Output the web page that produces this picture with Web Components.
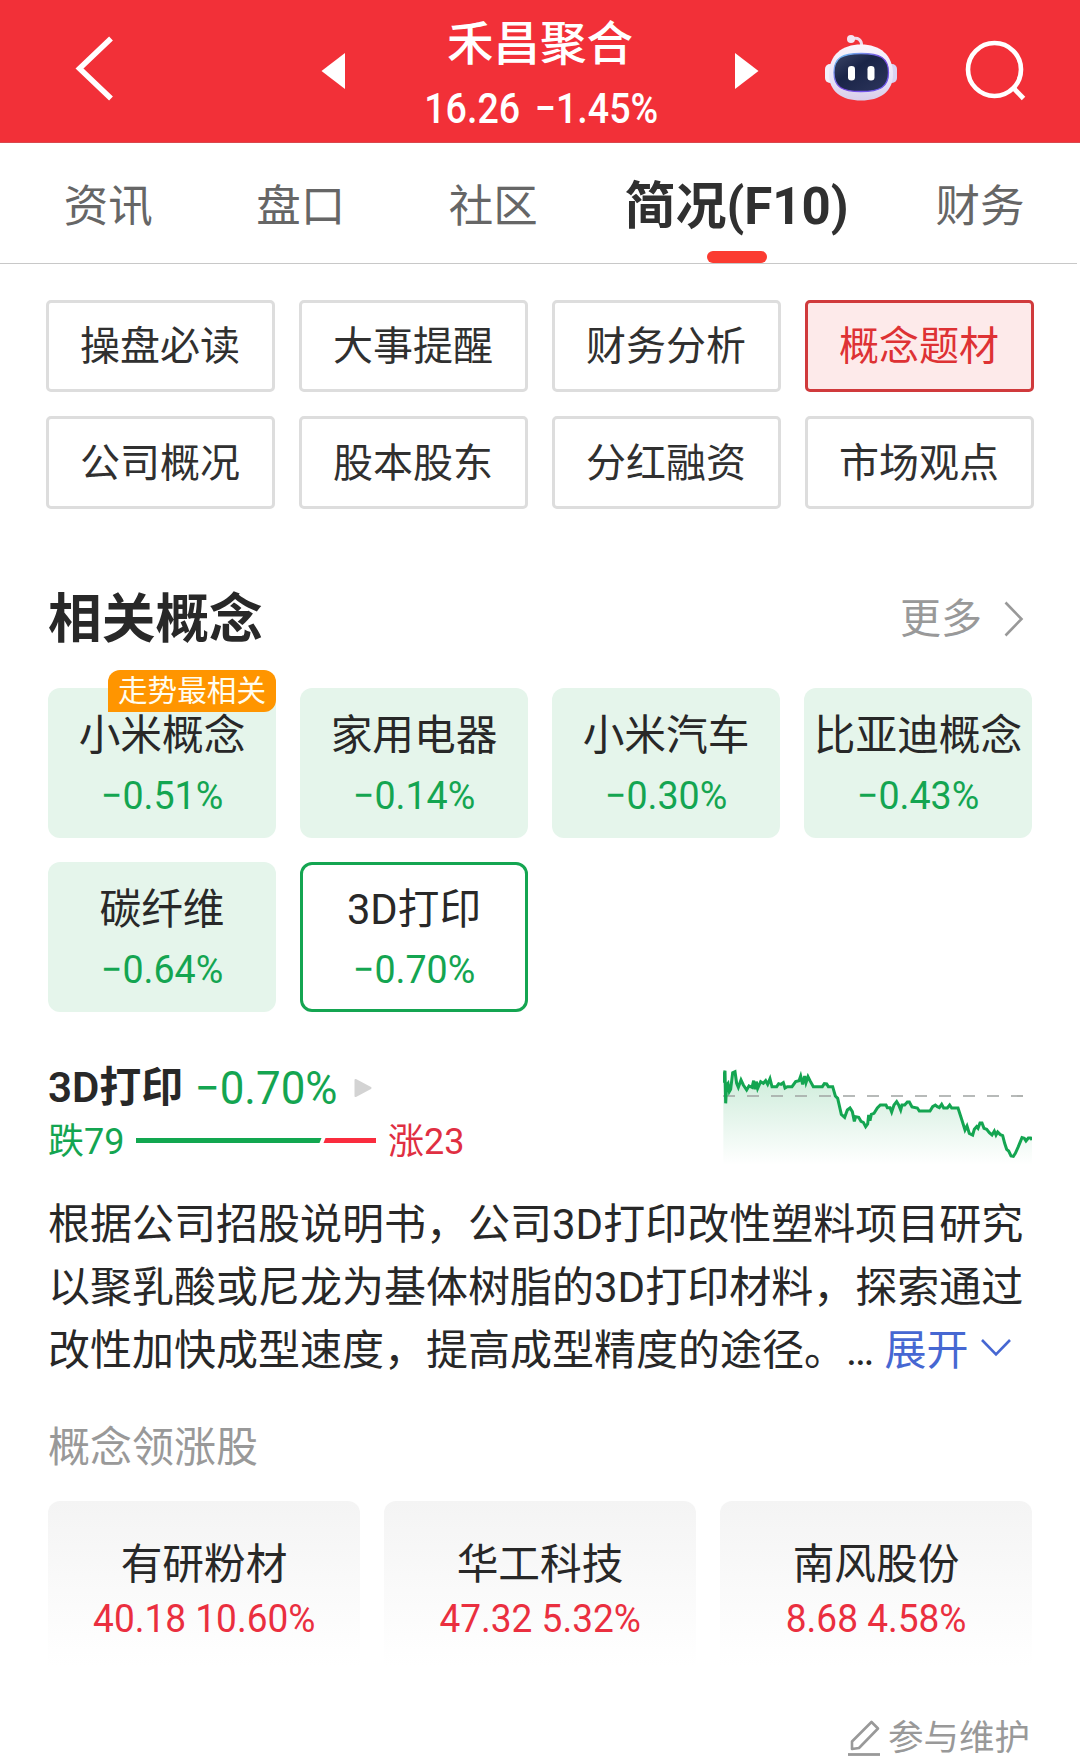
<!DOCTYPE html>
<html lang="zh-CN">
<head>
<meta charset="utf-8">
<title>禾昌聚合</title>
<style>
  body {
    margin: 0;
    width: 1080px;
    height: 1758px;
    overflow: hidden;
    background: #fff;
    color: #282828;
    font-family: Roboto, "Noto Sans CJK SC", sans-serif;
    --green: #14a551;
    --red: #ea2f3f;
    --grey: #999;
  }
</style>
</head>
<body>
<stock-page></stock-page>

<script>
// Small helper: attach an open shadow root with the given markup
class BaseElement extends HTMLElement {
  connectedCallback() {
    if (this.shadowRoot) return;
    this.attachShadow({ mode: "open" });
    this.shadowRoot.innerHTML = this.render();
  }
}

// Numbers are set slightly condensed
class QuoteValue extends BaseElement {
  render() {
    return `
      <style>
        :host { display: inline-block; white-space: nowrap; transform: scaleX(var(--squeeze, 0.955)); }
      </style>
      <slot></slot>
    `;
  }
}
customElements.define("quote-value", QuoteValue);

class StockHeader extends BaseElement {
  render() {
    return `
      <style>
        :host {
          display: grid;
          grid-template-columns: 320px 26px 388px 26px 320px;
          height: 143px;
          background: #f23038;
          color: #fff;
          box-shadow: inset 0 -1px #d9484d;
        }
        svg { display: block; height: 143px; width: 100%; }
        .title { padding-top: 14px; text-align: center; white-space: nowrap; }
        .name { font-size: 46.5px; line-height: 60px; font-weight: 500; }
        .price { font-size: 42.5px; line-height: 69px; font-weight: 500; padding-left: 3px; word-spacing: 6px; --squeeze: 0.885; }
      </style>
      <svg viewBox="0 0 320 143">
        <path d="M111 38.5L79.500 68.500L111 98.500" fill="none" stroke="#fff" stroke-width="5.500"/>
      </svg>
      <svg viewBox="320 0 26 143"><path d="M345 53V89L321.500 71Z" fill="#fff"/></svg>
      <div class="title">
        <div class="name"><slot name="name"></slot></div>
        <div class="price"><quote-value><slot name="price"></slot></quote-value></div>
      </div>
      <svg viewBox="734 0 26 143"><path d="M735 53V89L758.500 71Z" fill="#fff"/></svg>
      <svg viewBox="760 0 320 143">
        <defs>
          <linearGradient id="shell" x1="0" y1="0" x2="0" y2="1">
            <stop offset="0" stop-color="#fbf5fc"/>
            <stop offset="0.6" stop-color="#e9e4f8"/>
            <stop offset="1" stop-color="#d8cdea"/>
          </linearGradient>
          <linearGradient id="rim" x1="0" y1="0" x2="1" y2="1">
            <stop offset="0" stop-color="#6fd0f5"/>
            <stop offset="0.5" stop-color="#7a49e0"/>
            <stop offset="1" stop-color="#6a5cf0"/>
          </linearGradient>
          <linearGradient id="face" x1="0" y1="0" x2="1" y2="1">
            <stop offset="0" stop-color="#3c4668"/>
            <stop offset="0.4" stop-color="#1a2448"/>
            <stop offset="1" stop-color="#2d365c"/>
          </linearGradient>
        </defs>
        <path d="M852 39C858 37 862 40 861.500 46" fill="none" stroke="#f0dcec" stroke-width="3"/>
        <circle cx="851" cy="39" r="4" fill="#f4e4f2"/>
        <rect x="825" y="64" width="12" height="19" rx="5" fill="#f3f0fb"/>
        <rect x="885" y="64" width="12" height="19" rx="5" fill="#d9d3f3"/>
        <path d="M861 44.500C880 44.500 893 55 893 74C893 92 880 100.500 861 100.500C842 100.500 829 92 829 74C829 55 842 44.500 861 44.500Z" fill="url(#shell)"/>
        <path d="M861 53.500C880 53.500 888.500 58 888.500 72.500C888.500 87 880 91.500 861 91.500C842 91.500 834 87 834 72.500C834 58 842 53.500 861 53.500Z" fill="url(#face)" stroke="url(#rim)" stroke-width="1.300"/>
        <rect x="848" y="66" width="7" height="14.500" rx="3.300" fill="#fff"/>
        <rect x="867.500" y="66" width="7" height="14.500" rx="3.300" fill="#fff"/>
        <circle cx="994.500" cy="69.500" r="26.500" fill="none" stroke="#fff" stroke-width="4.600"/>
        <path d="M1013.500 88L1023.500 98.500" stroke="#fff" stroke-width="4.800"/>
      </svg>
    `;
  }
}
customElements.define("stock-header", StockHeader);

class TabBar extends BaseElement {
  render() {
    return `
      <style>
        :host {
          display: grid;
          grid-template-columns: 192.5px 192.5px 192.5px 294px 193px;
          box-sizing: border-box;
          width: 1077px;
          height: 121px;
          padding-left: 12px;
          border-bottom: 1px solid #c8c8c8;
        }
      </style>
      <slot></slot>
    `;
  }
}
customElements.define("tab-bar", TabBar);

class TabItem extends BaseElement {
  render() {
    return `
      <style>
        :host {
          display: flex;
          flex-direction: column;
          align-items: center;
          justify-content: space-between;
          height: 120px;
          color: #666;
          font-size: 44.5px;
          white-space: nowrap;
        }
        :host([active]) { color: #303030; font-size: 51px; font-weight: 700; }
        .label { line-height: 128px; height: 108px; }
        .mark { width: 60px; height: 12px; border-radius: 6px; }
        :host([active]) .mark { background: #fb3b31; }
      </style>
      <div class="label"><slot></slot></div>
      <div class="mark"></div>
    `;
  }
}
customElements.define("tab-item", TabItem);

class NavChip extends BaseElement {
  render() {
    return `
      <style>
        :host {
          display: flex;
          align-items: center;
          justify-content: center;
          box-sizing: border-box;
          border: 3px solid #ddd;
          border-radius: 5px;
          padding: 2px 1px 0 0;
          color: #303030;
          font-size: 40px;
          line-height: 60px;
        }
        :host([active]) { border-color: #d03a3c; background: #fdeaea; color: #de3234; }
      </style>
      <slot></slot>
    `;
  }
}
customElements.define("nav-chip", NavChip);

class SectionHeading extends BaseElement {
  render() {
    return `
      <style>
        :host { display: flex; align-items: center; height: 80px; margin: 70px 48px 0; line-height: 80px; }
        .title { flex: 1; padding-top: 2px; font-size: 53.7px; font-weight: 700; }
        .more { font-size: 41px; color: var(--grey); }
        svg { display: block; margin: 0 8px 0 22px; }
      </style>
      <div class="title"><slot></slot></div>
      <div class="more"><slot name="more"></slot></div>
      <svg width="20" height="38" viewBox="0 0 20 38">
        <path d="M1.500 2.500L17.500 19L1.500 35.500" fill="none" stroke="#999" stroke-width="2.600"/>
      </svg>
    `;
  }
}
customElements.define("section-heading", SectionHeading);

class ConceptCard extends BaseElement {
  render() {
    const badge = this.getAttribute("badge");
    return `
      <style>
        :host {
          display: block;
          position: relative;
          box-sizing: border-box;
          height: 150px;
          padding-top: 15px;
          border: 3px solid transparent;
          border-radius: 12px;
          background: #e5f5eb;
          text-align: center;
          white-space: nowrap;
        }
        :host([selected]) { background: #fff; border-color: var(--green); }
        .name { font-size: 41.7px; line-height: 60px; margin: 0 -3px; }
        .value { font-size: 39.4px; line-height: 60px; color: var(--green); }
        .badge {
          position: absolute;
          right: -3px;
          top: -21px;
          width: 168px;
          height: 42px;
          border-radius: 12px 12px 12px 0;
          background: #ff9500;
          color: #fffdf0;
          font-size: 29.6px;
          line-height: 42px;
        }
      </style>
      ${badge ? `<div class="badge">${badge}</div>` : ""}
      <div class="name"><slot></slot></div>
      <div class="value"><quote-value>${this.getAttribute("value")}</quote-value></div>
    `;
  }
}
customElements.define("concept-card", ConceptCard);

// Falling / rising stock counts with a proportional bar between them
class BreadthBar extends BaseElement {
  render() {
    return `
      <style>
        :host { display: flex; align-items: center; height: 48px; font-size: 36px; line-height: 48px; white-space: nowrap; }
        .down { color: var(--green); width: 88px; }
        .up { color: #e02f42; margin-left: 12px; }
        svg { display: block; margin-bottom: 3px; }
      </style>
      <div class="down">跌${this.getAttribute("down")}</div>
      <svg width="240" height="5" viewBox="0 0 240 5">
        <path d="M0 0H185.500L183.500 5H0Z" fill="#12a750"/>
        <path d="M189.500 0H240V5H187.500Z" fill="#fa2c3e"/>
      </svg>
      <div class="up">涨${this.getAttribute("up")}</div>
    `;
  }
}
customElements.define("breadth-bar", BreadthBar);

class TrendChart extends BaseElement {
  render() {
    const line = "70,98 72,75 75,62 77,160 80,105 84,100 88,125 92,118 98,68 105,65 110,100 115,112 123,90 130,105 140,120 147,108 156,112 161,92 165,118 169,95 173,115 182,95 190,100 197,92 203,103 210,86 216,110 230,110 236,101 243,103 250,98 255,114 262,110 276,110 287,95 297,92 302,78 308,103 314,78 318,98 324,80 330,92 340,110 367,110 373,101 380,102 385,110 398,110 406,138 413,145 424,193 434,202 442,180 450,174 457,185 463,214 467,200 476,202 483,214 490,217 497,230 503,222 506,195 510,212 514,193 522,190 532,174 541,165 558,165 562,173 570,173 575,186 582,165 590,155 596,165 602,180 606,165 614,165 622,156 628,156 636,171 652,174 658,183 690,183 698,170 706,165 712,170 718,173 725,163 731,174 742,174 749,165 755,174 774,174 784,205 795,240 801,228 808,250 818,255 823,238 830,230 834,235 840,219 846,219 852,235 860,238 868,248 876,255 883,243 888,255 893,246 901,254 908,257 914,280 920,298 926,303 933,318 940,319 946,310 955,290 966,263 973,265 978,273 985,264 992,264 996,270";
    return `
      <style>
        :host, svg { display: block; }
      </style>
      <svg width="309" height="100" viewBox="69 45 927 300">
        <defs>
          <linearGradient id="area" x1="0" y1="0" x2="0" y2="1">
            <stop offset="0" stop-color="#14a551" stop-opacity="0.22"/>
            <stop offset="1" stop-color="#14a551" stop-opacity="0"/>
          </linearGradient>
        </defs>
        <polygon points="70,345 ${line} 996,345" fill="url(#area)"/>
        <path d="M69 138H972" stroke="#a0a4a2" stroke-width="5" stroke-dasharray="36"/>
        <polyline points="${line}" fill="none" stroke="#14a551" stroke-width="9"/>
      </svg>
    `;
  }
}
customElements.define("trend-chart", TrendChart);

class ConceptDetail extends BaseElement {
  render() {
    return `
      <style>
        :host { display: flex; justify-content: space-between; margin: 46px 48px 0; height: 108px; }
        .line { display: flex; align-items: center; height: 60px; line-height: 60px; white-space: nowrap; }
        .name { font-size: 42px; font-weight: 600; }
        .value { font-size: 45.5px; color: var(--green); margin: 2px 13px 0 9px; --squeeze: 0.965; }
        trend-chart { margin-top: 7px; }
      </style>
      <div>
        <div class="line">
          <span class="name"><slot name="name"></slot></span>
          <quote-value class="value"><slot name="value"></slot></quote-value>
          <svg width="20" height="20" viewBox="0 0 20 20">
            <path d="M2.500 2L17.500 10L2.500 18Z" fill="#d3d3d3" stroke="#d3d3d3" stroke-width="2" stroke-linejoin="round"/>
          </svg>
        </div>
        <breadth-bar down="79" up="23"></breadth-bar>
      </div>
      <trend-chart></trend-chart>
    `;
  }
}
customElements.define("concept-detail", ConceptDetail);

class FoldText extends BaseElement {
  render() {
    return `
      <style>
        :host { display: block; margin: 27px 40px 0 48px; font-size: 42px; line-height: 63px; white-space: nowrap; }
        .more { color: #4667d2; }
        svg { margin-left: 10px; vertical-align: 7px; }
      </style>
      <slot></slot> <span class="more"><slot name="more"></slot></span><svg width="34" height="20" viewBox="0 0 34 20">
        <path d="M3 2L17 16.500L31 2" fill="none" stroke="#4667d2" stroke-width="2.600"/>
      </svg>
    `;
  }
}
customElements.define("fold-text", FoldText);

class LeaderCard extends BaseElement {
  render() {
    return `
      <style>
        :host {
          display: block;
          box-sizing: border-box;
          height: 165px;
          padding-top: 34px;
          border-radius: 12px 12px 0 0;
          background: linear-gradient(#f4f4f4, #fff);
          text-align: center;
          white-space: nowrap;
        }
        .name { font-size: 41.7px; line-height: 60px; }
        .value { font-size: 39.4px; line-height: 47px; color: var(--red); --squeeze: 0.94; }
      </style>
      <div class="name"><slot></slot></div>
      <div class="value"><quote-value>${this.getAttribute("value")}</quote-value></div>
    `;
  }
}
customElements.define("leader-card", LeaderCard);

class StockPage extends BaseElement {
  render() {
    return `
      <style>
        :host { display: block; }
        .chips {
          display: grid;
          grid-template-columns: repeat(4, 229px);
          grid-template-rows: 92px 93px;
          gap: 24px;
          margin: 36px 0 0 46px;
        }
        .concepts { display: grid; grid-template-columns: repeat(4, 228px); gap: 24px; margin: 29px 0 0 48px; }
        .subtitle { margin: 36px 48px 0; font-size: 42px; line-height: 60px; color: var(--grey); }
        .leaders { display: grid; grid-template-columns: repeat(3, 312px); gap: 24px; margin: 23px 0 0 48px; }
        .footer {
          display: flex;
          justify-content: flex-end;
          align-items: center;
          gap: 7px;
          margin: 53px 50px 0;
          height: 39px;
          font-size: 35.5px;
          line-height: 39px;
          color: var(--grey);
        }
      </style>
      <stock-header>
        <span slot="name">禾昌聚合</span>
        <span slot="price">16.26 −1.45%</span>
      </stock-header>
      <tab-bar>
        <tab-item>资讯</tab-item>
        <tab-item>盘口</tab-item>
        <tab-item>社区</tab-item>
        <tab-item active>简况(F10)</tab-item>
        <tab-item>财务</tab-item>
      </tab-bar>
      <div class="chips">
        <nav-chip>操盘必读</nav-chip>
        <nav-chip>大事提醒</nav-chip>
        <nav-chip>财务分析</nav-chip>
        <nav-chip active>概念题材</nav-chip>
        <nav-chip>公司概况</nav-chip>
        <nav-chip>股本股东</nav-chip>
        <nav-chip>分红融资</nav-chip>
        <nav-chip>市场观点</nav-chip>
      </div>
      <section-heading>相关概念<span slot="more">更多</span></section-heading>
      <div class="concepts">
        <concept-card value="−0.51%" badge="走势最相关">小米概念</concept-card>
        <concept-card value="−0.14%">家用电器</concept-card>
        <concept-card value="−0.30%">小米汽车</concept-card>
        <concept-card value="−0.43%">比亚迪概念</concept-card>
        <concept-card value="−0.64%">碳纤维</concept-card>
        <concept-card value="−0.70%" selected>3D打印</concept-card>
      </div>
      <concept-detail>
        <span slot="name">3D打印</span>
        <span slot="value">−0.70%</span>
      </concept-detail>
      <fold-text>根据公司招股说明书，公司3D打印改性塑料项目研究<br>以聚乳酸或尼龙为基体树脂的3D打印材料，探索通过<br>改性加快成型速度，提高成型精度的途径。…<span slot="more">展开</span></fold-text>
      <div class="subtitle">概念领涨股</div>
      <div class="leaders">
        <leader-card value="40.18 10.60%">有研粉材</leader-card>
        <leader-card value="47.32 5.32%">华工科技</leader-card>
        <leader-card value="8.68 4.58%">南风股份</leader-card>
      </div>
      <div class="footer">
        <svg width="34" height="38" viewBox="0 0 34 38">
          <path d="M5 29V21.500L24.500 2L31 8.500L12 28L5 29Z" fill="none" stroke="#999" stroke-width="2.600" stroke-linejoin="round"/>
          <path d="M1 34.500H33" stroke="#999" stroke-width="2.800"/>
        </svg>
        <span>参与维护</span>
      </div>
    `;
  }
}
customElements.define("stock-page", StockPage);
</script>
</body>
</html>
